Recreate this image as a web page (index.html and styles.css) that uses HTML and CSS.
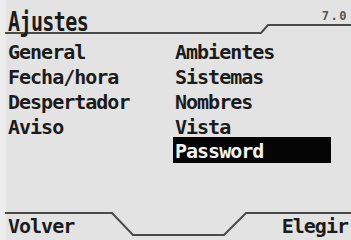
FILE: index.html
```html
<!DOCTYPE html>
<html lang="es">
<head>
<meta charset="utf-8">
<link rel="stylesheet" href="styles.css">
</head>
<body>
<div class="screen">
  <header class="head">
    <svg class="rule" width="351" height="40" viewBox="0 0 351 40">
      <polyline points="5,33 261,33 268,25 351,25" fill="none" stroke="#4a4a4a" stroke-width="2"/>
    </svg>
    <span class="title">Ajustes</span>
    <span class="ver">7.0</span>
  </header>
  <main class="menu">
    <ul class="col">
      <li>General</li>
      <li>Fecha/hora</li>
      <li>Despertador</li>
      <li>Aviso</li>
    </ul>
    <ul class="col">
      <li>Ambientes</li>
      <li>Sistemas</li>
      <li>Nombres</li>
      <li>Vista</li>
      <li class="sel">Password</li>
    </ul>
  </main>
  <footer class="foot">
    <svg class="rule" width="351" height="40" viewBox="0 0 351 40">
      <polyline points="5,13 112,13 133,35 224,35 246,13 351,13" fill="none" stroke="#4a4a4a" stroke-width="2"/>
    </svg>
    <span class="key">Volver</span>
    <span class="key">Elegir</span>
  </footer>
</div>
</body>
</html>
```
FILE: styles.css
```css
html, body {
  margin: 0;
  padding: 0;
}
body {
  width: 351px;
  height: 240px;
  overflow: hidden;
  background: #e3e3e3;
  color: #1b1b1b;
  font-family: "DejaVu Sans Mono", "Liberation Mono", monospace;
  font-weight: bold;
}
.screen {
  width: 351px;
  height: 240px;
  display: flex;
  flex-direction: column;
  border-left: 6px solid #ececec;
  box-sizing: border-box;
}
.head {
  position: relative;
  height: 40px;
  box-sizing: border-box;
  padding: 12px 3px 0 2px;
  display: flex;
  justify-content: space-between;
  align-items: flex-start;
}
.rule {
  position: absolute;
  left: -6px;
  top: 0;
}
.title {
  position: relative;
  display: inline-block;
  font-size: 20px;
  line-height: 25px;
  letter-spacing: -0.6px;
  transform: scaleY(1.3);
  transform-origin: 0 19px;
}
.ver {
  position: relative;
  font-size: 12px;
  line-height: 12px;
  letter-spacing: 1.5px;
  margin-top: -2px;
  color: #555;
}
.menu {
  height: 160px;
  display: grid;
  grid-template-columns: 167px 1fr;
  padding-left: 2px;
}
.col {
  list-style: none;
  margin: 0;
  padding: 0;
}
.col li {
  font-size: 20px;
  line-height: 25px;
  letter-spacing: -1px;
  white-space: nowrap;
}
.col li.sel {
  background: #050505;
  color: #f2f2f2;
  width: 158px;
  height: 26px;
  box-sizing: border-box;
  margin: -3px 0 0 -2px;
  padding: 3px 0 0 2px;
  line-height: 23px;
}
.foot {
  position: relative;
  height: 40px;
  box-sizing: border-box;
  padding: 14px 3px 0 2px;
  display: flex;
  justify-content: space-between;
  align-items: flex-start;
}
.key {
  position: relative;
  font-size: 20px;
  line-height: 25px;
  letter-spacing: -1px;
}
```
